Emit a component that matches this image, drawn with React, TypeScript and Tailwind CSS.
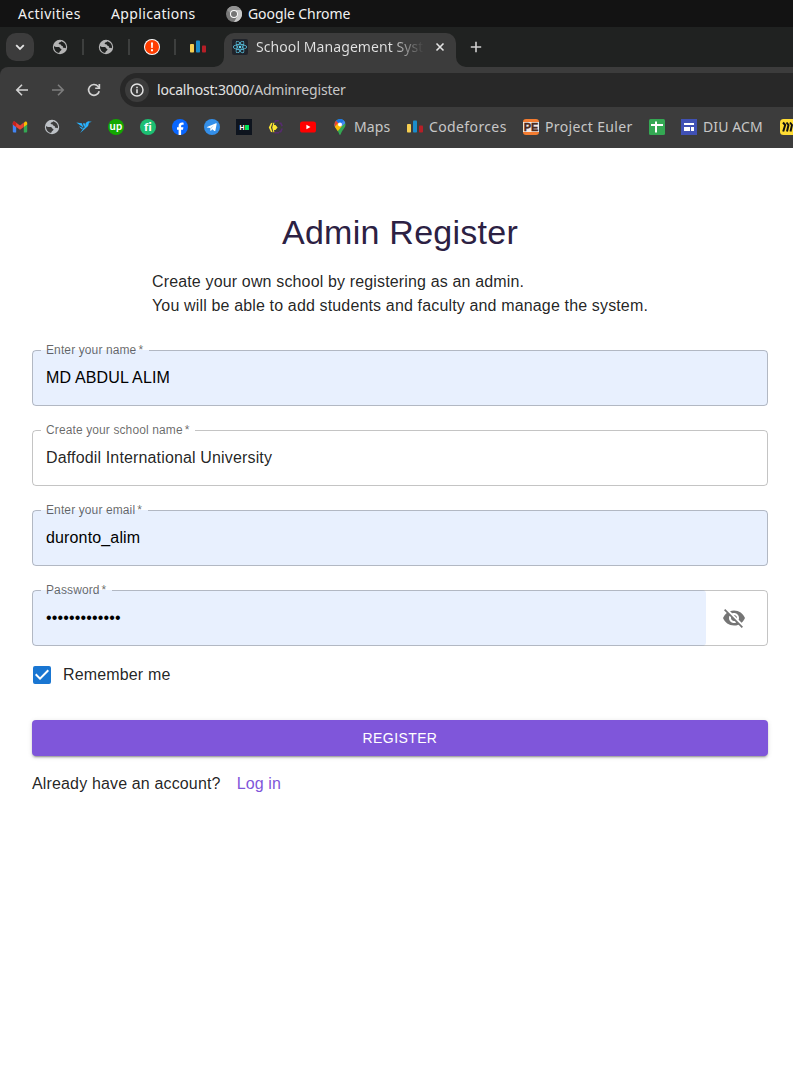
import type { ReactNode } from "react";
import { FaReact } from "react-icons/fa";
import { MdVisibilityOff, MdCheckBox } from "react-icons/md";

function Globe({ fill = "#b4b4b4", bg = "#202221" }: { fill?: string; bg?: string }) {
  return (
    <svg className="block size-4" viewBox="0 0 16 16">
      <circle cx="8" cy="8" r="7.2" fill={fill} />
      <path
        d="M2 6.9C3.4 8 5 8.100 6.800 8.100c1.200 0 .9 1.400 1.900 1.600 1 .2 1 1.100.2 1.700-.9.700-1.400 1.300-1.800 2.500A6 6 0 0 1 2 6.900Z"
        fill={bg}
      />
      <path
        d="M9.200 2.200c-.5 1.100-1.700 1-2.400 1.700-.5.700.4 1.300 1.400 1.300.9.100.6 1.400 1.600 1.600.9.200 1.300.6 1.100 1.300-.2.800.8 1 1.400.8.700-.2 1 .3 1.600.4A6 6 0 0 0 9.200 2.200Z"
        fill={bg}
      />
    </svg>
  );
}

function BarsIcon() {
  return (
    <svg className="block size-4" viewBox="0 0 16 16">
      <rect x="0" y="5" width="4" height="8.500" rx=".8" fill="#f6ce50" />
      <rect x="6" y="1.500" width="4" height="12" rx=".8" fill="#1b8dcc" />
      <rect x="12" y="6.500" width="4" height="7" rx=".8" fill="#b61f27" />
    </svg>
  );
}

function Gmail() {
  return (
    <svg className="block size-4" viewBox="0 0 16 16">
      <path d="M.8 4.500 4.200 7v6.500H1.900A1.100 1.100 0 0 1 .8 12.400Z" fill="#4285f4" />
      <path d="M15.200 4.500 11.800 7v6.500h2.300a1.100 1.100 0 0 0 1.100-1.100Z" fill="#34a853" />
      <path d="M11.800 4v4l3.400-2.500V4.100c0-1.400-1.500-2-2.500-1.200Z" fill="#fbbc04" />
      <path d="M.8 5.500V4.100c0-1.400 1.500-2 2.500-1.200L8 6.400l3.800-2.900V8L8 10.800 4.200 8Z" fill="#ea4335" />
      <path d="M.8 4.100c0-1.400 1.500-2 2.500-1.200l.9.700V8L.8 5.500Z" fill="#c5221f" />
    </svg>
  );
}

function Bird() {
  return (
    <svg className="block size-4" viewBox="0 0 16 16" fill="#29b2fe">
      <path d="M.3 3.600 5.800 4.300 7.600 8.800Z" />
      <path d="M2.800 7.200 7 8.900l-1.200 1.300Z" />
      <path d="m6.800 4.300 2.900.3L8.300 8.500Z" />
      <path d="M8.600 8.600 10.200 3.500l2-1.200 3.600.5-2.800.9-.9 3.300-3.600 3.300L4.200 14l3.300-5Z" />
    </svg>
  );
}

function Facebook() {
  return (
    <svg className="block size-4" viewBox="0 0 16 16">
      <circle cx="8" cy="8" r="8" fill="#0866ff" />
      <path d="M6.600 16v-5.300H5V8.300h1.600v-1C6.600 4.700 7.800 3.500 10.200 3.500c.5 0 1.100.1 1.400.2v2.100h-.9c-1.100 0-1.600.5-1.600 1.500v1h2.300l-.4 2.400H9.100V16a8 8 0 0 1-2.500 0Z" fill="#fff" />
    </svg>
  );
}

function Telegram() {
  return (
    <svg className="block size-4" viewBox="0 0 16 16">
      <circle cx="8" cy="8" r="8" fill="#348fe9" />
      <path d="m3 8 9-3.800c.5-.2.800.1.700.6l-1.300 6.700c-.1.600-.5.700-1 .4L8.300 10.300 7 11.700c-.3.300-.7.200-.7-.2V9L3.100 8.400c-.4-.1-.4-.3-.1-.4Z" fill="#fff" />
      <path d="M6.300 9 10 6.300 7.200 9.500 7 11.600Z" fill="#a9cbea" />
    </svg>
  );
}

function PurpleMark() {
  return (
    <svg className="block size-4" viewBox="0 0 16 16">
      <path d="M6.500 3.500 8 1.800h2.800M11.300 4.200h1.500l1.400 3M14.200 9.500l-1.500 3.200h-1.500M6.500 13.800h4.500" fill="none" stroke="#572b70" strokeWidth="1.600" />
      <path d="M4.600 3.800 3 4 .8 8.500 3 13l1.600.2L2.900 8.500Z" fill="#ffe632" />
      <path d="M5.400 3.800 4.200 8.500l1.200 4.700h1L6 11h1.500L9.600 8.500 7.500 6H6l.4-2.200Z" fill="#ffe632" />
    </svg>
  );
}

function Youtube() {
  return (
    <svg className="block size-4" viewBox="0 0 16 16">
      <rect y="2.400" width="16" height="11.200" rx="2.600" fill="#f00" />
      <path d="M6.400 5.700v4.600L10.500 8Z" fill="#fff" />
    </svg>
  );
}

function MapsPin() {
  return (
    <svg className="block size-4" viewBox="0 0 16 16">
      <defs>
        <clipPath id="pin">
          <path d="M8 0a5.500 5.500 0 0 0-5.500 5.500c0 3.300 2.600 4.500 4.300 8.600.4 1 .6 1.900 1.200 1.900s.8-.9 1.200-1.900c1.700-4.100 4.300-5.300 4.300-8.600A5.500 5.500 0 0 0 8 0Z" />
        </clipPath>
      </defs>
      <g clipPath="url(#pin)">
        <rect width="16" height="16" fill="#34a853" />
        <path d="M2 5 8-1h6L8 5.500 3 10 2 8Z" fill="#4285f4" />
        <path d="M0 1.500h4.200L8 5.500 4 9 0 7Z" fill="#ea4335" />
        <path d="M2 8.500 8 2l3.500 3.500-6.500 7.500Z" fill="#fbbc04" />
        <path d="M4 0h9l-4 6.500-4.800-4.800Z" fill="#1a73e8" />
        <path d="m8 5 5.500-4.500V4L9.500 7.500Z" fill="#4285f4" />
      </g>
      <circle cx="8" cy="5.500" r="2" fill="#fff" />
    </svg>
  );
}

function Euler() {
  return (
    <span className="block size-4 rounded-[3px] bg-[#f47c30] pt-[3px]">
      <span className="flex h-[10px] items-center justify-center bg-[#f3e9e4] font-['Liberation_Sans'] text-[11px] leading-none font-bold tracking-[-0.2px] text-[#4a2a1c] [-webkit-text-stroke:0.4px_#4a2a1c]">
        PE
      </span>
    </span>
  );
}

function Sheets() {
  return (
    <svg className="block size-4" viewBox="0 0 16 16">
      <rect width="16" height="16" rx="1.500" fill="#34a853" />
      <path d="M2 5h12v2H8v6.500H6V7H2ZM6 2.500h2V5H6Z" fill="#fff" />
    </svg>
  );
}

function Sites() {
  return (
    <svg className="block size-4" viewBox="0 0 16 16">
      <rect width="16" height="16" fill="#4051b5" />
      <path d="M3 4h10v2H3ZM3 8h6v4H3ZM10 8h3v4h-3Z" fill="#fff" />
    </svg>
  );
}

function Miro() {
  return (
    <svg className="block size-4 shrink-0" viewBox="0 0 16 16">
      <rect width="16" height="16" rx="3.500" fill="#ffdd33" />
      <path d="M3 3.500 5.200 6l-2 6.500M6.500 3.500 8.500 6 7 12.500M10 3.500 12 6l-1.500 6.500" fill="none" stroke="#111" strokeWidth="2" />
    </svg>
  );
}

function Bookmark({ icon, className, label }: { icon: ReactNode; className: string; label?: string }) {
  return (
    <div className={`flex h-4 shrink-0 items-center gap-[6px] whitespace-nowrap ${className}`}>
      <span className="block size-4 shrink-0">{icon}</span>
      {label && <span>{label}</span>}
    </div>
  );
}

function Chrome() {
  return (
    <header className="font-['Noto_Sans','Open_Sans',sans-serif] text-sm text-[#e3e3e3]">
      <div className="flex h-[27px] items-center bg-[#131313] pl-[18px] whitespace-nowrap text-[#f2f2f2]">
        <span className="w-[93px] tracking-[0.450px]">Activities</span>
        <span className="w-[115px] tracking-[0.350px]">Applications</span>
        <svg className="mr-[6px] size-4" viewBox="0 0 16 16">
          <circle cx="8" cy="8" r="8" fill="#777" />
          <path d="M8 4h7a8 8 0 0 1-7 12l3.500-6A4 4 0 0 0 8 4Z" fill="#c9c9c9" />
          <path d="M1 4a8 8 0 0 1 14 0H8a4 4 0 0 0-3.800 3Z" fill="#929292" />
          <circle cx="8" cy="8" r="4" fill="#fff" />
          <circle cx="8" cy="8" r="3" fill="#757575" />
        </svg>
        <span className="tracking-[-0.080px]">Google Chrome</span>
      </div>

      <div className="flex h-10 items-end overflow-hidden bg-[#202221]">
        <div className="flex h-10 w-[214px] shrink-0 items-center pl-[6px]">
          <div className="flex size-7 shrink-0 items-center justify-center rounded-[10px] bg-[#3c3c3c]">
            <svg className="size-3" viewBox="0 0 12 12">
              <path d="m2.200 4.200 3.800 3.800 3.800-3.800" fill="none" stroke="#e3e3e3" strokeWidth="1.800" />
            </svg>
          </div>
          <span className="ml-[18px]"><Globe /></span>
          <span className="ml-[14px] h-4 w-[2px] bg-[#3d3f3e]" />
          <span className="ml-[14px]"><Globe /></span>
          <span className="ml-[14px] h-4 w-[2px] bg-[#3d3f3e]" />
          <svg className="ml-[14px] size-4" viewBox="0 0 16 16">
            <circle cx="8" cy="8" r="8" fill="#fff" />
            <circle cx="8" cy="8" r="7" fill="#ff3d00" />
            <path d="M7 3.500h2L8.700 9H7.300ZM7 10.300h2v1.900H7Z" fill="#fff" />
          </svg>
          <span className="ml-[14px] h-4 w-[2px] bg-[#3d3f3e]" />
          <span className="ml-[14px] size-4"><BarsIcon /></span>
        </div>
        <svg className="block size-[10px] shrink-0" viewBox="0 0 10 10">
          <path d="M0 10A10 10 0 0 0 10 0v10Z" fill="#3c3c3c" />
        </svg>
        <div className="flex h-[34px] w-[232px] shrink-0 items-center rounded-t-[10px] bg-[#3c3c3c] pb-[6px] pl-2">
          <span className="flex size-4 shrink-0 items-center justify-center rounded-[2px] bg-[#20232a] text-[#61dafb]">
            <FaReact className="size-[14px]" />
          </span>
          <span className="ml-2 w-[168px] overflow-hidden bg-linear-to-r from-[#e3e3e3] from-80% to-transparent bg-clip-text tracking-[0.080px] whitespace-nowrap text-transparent">
            School Management Syst
          </span>
          <svg className="ml-[11px] size-[10px] shrink-0" viewBox="0 0 10 10">
            <path d="m1.500 1.500 7 7m0-7-7 7" stroke="#e3e3e3" strokeWidth="1.600" />
          </svg>
        </div>
        <svg className="block size-[10px] shrink-0" viewBox="0 0 10 10">
          <path d="M0 0a10 10 0 0 0 10 10H0Z" fill="#3c3c3c" />
        </svg>
        <div className="flex h-10 items-center pl-1">
          <svg className="size-3" viewBox="0 0 12 12">
            <path d="M6 .8v10.400M.8 6h10.400" stroke="#d0d0d0" strokeWidth="1.600" />
          </svg>
        </div>
      </div>

      <div className="bg-[#202221]">
        <div className="flex h-[46px] items-center rounded-tl-[8px] bg-[#3c3c3c] pl-[14px]">
          <svg className="size-4" viewBox="0 0 16 16">
            <path d="M14 8H3m5-5.200L2.800 8 8 13.200" fill="none" stroke="#d2d2d2" strokeWidth="1.600" />
          </svg>
          <svg className="ml-5 size-4" viewBox="0 0 16 16">
            <path d="M2 8h11M8 2.800 13.200 8 8 13.200" fill="none" stroke="#7d7d7d" strokeWidth="1.600" />
          </svg>
          <svg className="ml-5 size-4" viewBox="0 0 16 16">
            <path d="M13.200 9.200A5.400 5.400 0 1 1 12 4.300l1 1" fill="none" stroke="#d2d2d2" strokeWidth="1.700" />
            <path d="M14.200 2v5H9.200V5.400h3.300V2Z" fill="#d2d2d2" />
          </svg>
          <div className="ml-[18px] flex h-[34px] flex-1 items-center rounded-l-full bg-[#282828] pl-[5px]">
            <span className="flex size-6 items-center justify-center rounded-full bg-[#3c3c3c]">
              <svg className="size-[14px]" viewBox="0 0 14 14">
                <circle cx="7" cy="7" r="6" fill="none" stroke="#e3e3e3" strokeWidth="1.500" />
                <path d="M6.200 6.200h1.600v4H6.200ZM6.200 3.700h1.600v1.500H6.200Z" fill="#e3e3e3" />
              </svg>
            </span>
            <span className="ml-2 tracking-[-0.200px] whitespace-nowrap">
              localhost:3000<span className="text-[#c7c7c7]">/Adminregister</span>
            </span>
          </div>
        </div>
      </div>

      <nav className="flex h-[35px] items-center overflow-hidden bg-[#3c3c3c] pb-[7px] pl-3 text-[#c7c7c7]">
        <Bookmark className="w-8" icon={<Gmail />} />
        <Bookmark className="w-8" icon={<Globe fill="#bdc1c6" bg="#3c3c3c" />} />
        <Bookmark className="w-8" icon={<Bird />} />
        <Bookmark
          className="w-8"
          icon={
            <span className="flex size-4 items-center justify-center rounded-full bg-[#14a800] pb-[3px] font-['Lato'] text-[11px] leading-none font-bold text-white">
              up
            </span>
          }
        />
        <Bookmark
          className="w-8"
          icon={
            <span className="flex size-4 items-center justify-center rounded-full bg-[#1dbf73] pb-px font-['Lato'] text-[12px] leading-none font-black text-white">
              fi
            </span>
          }
        />
        <Bookmark className="w-8" icon={<Facebook />} />
        <Bookmark className="w-8" icon={<Telegram />} />
        <Bookmark
          className="w-8"
          icon={
            <span className="flex size-4 items-center justify-center bg-[#0e141e] font-['Liberation_Sans'] text-[7px] leading-none font-bold text-white">
              H<span className="h-[5px] w-1 bg-[#00e35b]" />
            </span>
          }
        />
        <Bookmark className="w-8" icon={<PurpleMark />} />
        <Bookmark className="w-8" icon={<Youtube />} />
        <Bookmark className="w-[75px] tracking-[0.100px]" icon={<MapsPin />} label="Maps" />
        <Bookmark className="w-[116px] tracking-[0.380px]" icon={<BarsIcon />} label="Codeforces" />
        <Bookmark className="w-[126px] tracking-[0.350px]" icon={<Euler />} label="Project Euler" />
        <Bookmark className="w-8" icon={<Sheets />} />
        <Bookmark className="w-[99px] tracking-[0.120px]" icon={<Sites />} label="DIU ACM" />
        <Miro />
      </nav>
    </header>
  );
}

function Field({
  label,
  children,
  filled = false,
  action,
}: {
  label: string;
  children: ReactNode;
  filled?: boolean;
  action?: ReactNode;
}) {
  return (
    <div className="relative flex h-14 w-full rounded text-base">
      <div
        className={`flex flex-1 items-center rounded pb-px pl-[14px] ${filled ? "bg-[#e8f0fe] text-black" : "text-black/87"}`}
      >
        {children}
      </div>
      {action}
      <fieldset className="pointer-events-none absolute inset-x-0 -top-[5px] bottom-0 rounded border border-black/23 px-2">
        <legend className="h-[11px] pr-[6px] pl-[5px] text-xs leading-[11px] tracking-[0.113px] whitespace-nowrap text-black/60">
          {label}
          <span className="pl-[2px]">*</span>
        </legend>
      </fieldset>
    </div>
  );
}

export default function App() {
  return (
    <div className="min-h-[1080px] w-full bg-white font-['Liberation_Sans',Arial,sans-serif] text-base tracking-[0.150px] text-black/87">
      <Chrome />
      <main className="flex flex-col items-center pt-[63px] pr-[25px] pl-8">
        <h1 className="mb-[17px] text-[34px] leading-[42px] tracking-[0.250px] text-[#2c2143]">Admin Register</h1>
        <p className="leading-6">
          Create your own school by registering as an admin.
          <br />
          You will be able to add students and faculty and manage the system.
        </p>
        <form className="mt-8 flex w-full flex-col">
          <div className="flex flex-col gap-6">
            <Field label="Enter your name" filled>
              <span>MD ABDUL ALIM</span>
            </Field>
            <Field label="Create your school name">
              <span>Daffodil International University</span>
            </Field>
            <Field label="Enter your email" filled>
              <span>duronto_alim</span>
            </Field>
            <Field
              label="Password"
              filled
              action={
                <div className="flex w-[62px] items-center pl-4 text-black/54">
                  <MdVisibilityOff className="size-6" />
                </div>
              }
            >
              <span className="tracking-[0.150px]">•••••••••••••</span>
            </Field>
          </div>
          <label className="mt-2 flex h-[42px] items-center">
            <MdCheckBox className="-ml-[2px] size-6 text-[#1976d2]" />
            <span className="ml-[9px]">Remember me</span>
          </label>
          <button
            type="button"
            className="mt-6 h-9 w-full rounded bg-[#7f56da] text-sm tracking-[0.400px] text-white shadow-[0_3px_1px_-2px_rgba(0,0,0,0.2),0_2px_2px_0_rgba(0,0,0,0.14),0_1px_5px_0_rgba(0,0,0,0.12)]"
          >
            REGISTER
          </button>
          <div className="mt-4 flex gap-4 leading-6">
            <span>Already have an account?</span>
            <a className="text-[#7f56da]">Log in</a>
          </div>
        </form>
      </main>
    </div>
  );
}
